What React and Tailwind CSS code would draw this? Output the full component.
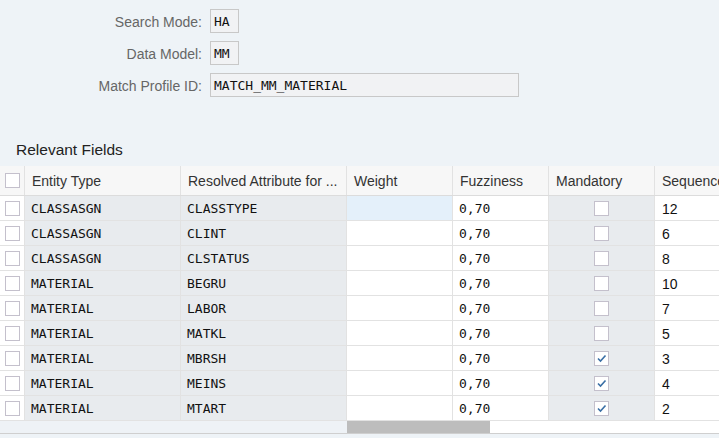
import React from "react";

const rows = [
  ["CLASSASGN", "CLASSTYPE", "0,70", false, "12", true],
  ["CLASSASGN", "CLINT", "0,70", false, "6"],
  ["CLASSASGN", "CLSTATUS", "0,70", false, "8"],
  ["MATERIAL", "BEGRU", "0,70", false, "10"],
  ["MATERIAL", "LABOR", "0,70", false, "7"],
  ["MATERIAL", "MATKL", "0,70", false, "5"],
  ["MATERIAL", "MBRSH", "0,70", true, "3"],
  ["MATERIAL", "MEINS", "0,70", true, "4"],
  ["MATERIAL", "MTART", "0,70", true, "2"],
];

const mono = "font-['DejaVu_Sans_Mono',monospace] text-[13px] text-[#111]";
const sans = "font-['Liberation_Sans',Arial,sans-serif]";
const cols = "grid grid-cols-[25px_156px_166px_106px_96px_106px_110px]";

function Box({ checked }) {
  return (
    <div className="w-[15px] h-[15px] border border-[#c4c0cc] bg-white flex items-center justify-center">
      {checked && (
        <svg width="11" height="11" viewBox="0 0 11 11">
          <path d="M2 5.5 L4.5 8 L9.5 2.5" fill="none" stroke="#3a6fa5" strokeWidth="1.6" />
        </svg>
      )}
    </div>
  );
}

function Field({ label, value, w }) {
  return (
    <div className="flex items-center h-[24px]">
      <div className={`w-[202px] pt-[2px] text-right text-[14px] text-[#666] ${sans}`}>{label}</div>
      <div
        className={`ml-[8px] h-[24px] border border-[#c8c8c8] bg-[#f1f2f4] flex items-center pl-[3px] pt-[2px] ${mono}`}
        style={{ width: w }}
      >
        {value}
      </div>
    </div>
  );
}

export default function App() {
  return (
    <div className={`w-[719px] h-[438px] bg-[#eef3f7] overflow-hidden ${sans}`}>
      <div className="pt-[9px] flex flex-col gap-[8px]">
        <Field label="Search Mode:" value="HA" w="29px" />
        <Field label="Data Model:" value="MM" w="29px" />
        <Field label="Match Profile ID:" value="MATCH_MM_MATERIAL" w="309px" />
      </div>
      <div className="mt-[41px] pl-[16px] text-[15.5px] leading-[24px] text-[#222]">Relevant Fields</div>
      <div className="mt-[4px] w-[765px]">
        <div className={`${cols} h-[30px] bg-[#f7f7f7] border-b border-[#dcdcdc] text-[14px] text-[#333]`}>
          <div className="border-r border-[#e2e2e2] flex items-center pl-[5px]"><Box /></div>
          <div className="border-r border-[#e2e2e2] flex items-center pl-[7px] pt-[2px]">Entity Type</div>
          <div className="border-r border-[#e2e2e2] flex items-center pl-[7px] pt-[2px] whitespace-nowrap">Resolved Attribute for ...</div>
          <div className="border-r border-[#e2e2e2] flex items-center pl-[7px] pt-[2px]">Weight</div>
          <div className="border-r border-[#e2e2e2] flex items-center pl-[7px] pt-[2px]">Fuzziness</div>
          <div className="border-r border-[#e2e2e2] flex items-center pl-[7px] pt-[2px]">Mandatory</div>
          <div className="flex items-center pl-[7px] pt-[2px]">Sequence</div>
        </div>
        {rows.map((r, i) => (
          <div key={i} className={`${cols} h-[25px] border-b border-[#e2e2e2]`}>
            <div className="bg-white border-r border-[#e2e2e2] flex items-center pl-[5px]"><Box /></div>
            <div className={`bg-[#e8ebee] border-r border-[#e2e2e2] flex items-center pl-[6px] pt-[2px] ${mono}`}>{r[0]}</div>
            <div className={`bg-[#e8ebee] border-r border-[#e2e2e2] flex items-center pl-[6px] pt-[2px] ${mono}`}>{r[1]}</div>
            <div className={`${r[5] ? "bg-[#e4f0fa]" : "bg-white"} border-r border-[#e2e2e2]`}></div>
            <div className={`bg-white border-r border-[#e2e2e2] flex items-center pl-[6px] pt-[2px] ${mono}`}>{r[2]}</div>
            <div className="bg-[#e8ebee] border-r border-[#e2e2e2] flex items-center justify-center pt-[1px]"><Box checked={r[3]} /></div>
            <div className="bg-white flex items-center pl-[7px] pt-[2px] text-[14px] text-[#111]">{r[4]}</div>
          </div>
        ))}
        <div className="flex h-[12px]">
          <div className="w-[347px] bg-[#eef2f6]"></div>
          <div className="flex-1 bg-white flex">
            <div className="w-[143px] bg-[#bdbdbd]"></div>
          </div>
        </div>
        <div className="h-px bg-[#cfcfcf]"></div>
      </div>
    </div>
  );
}
